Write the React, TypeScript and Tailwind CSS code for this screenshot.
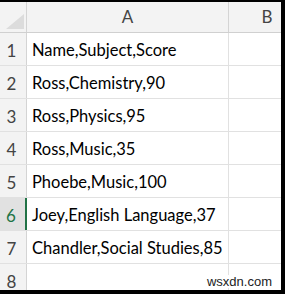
const rows = [
  "Name,Subject,Score",
  "Ross,Chemistry,90",
  "Ross,Physics,95",
  "Ross,Music,35",
  "Phoebe,Music,100",
  "Joey,English Language,37",
  "Chandler,Social Studies,85",
  "",
];

export default function App() {
  return (
    <div className="w-[285px] h-[294px] bg-black pt-[2px] pr-[4px] pb-[4px]">
      <div
        className="relative w-[281px] h-[288px] bg-white overflow-hidden"
        style={{ fontFamily: "Lato, 'Open Sans', sans-serif" }}
      >
        {/* column headers */}
        <div className="flex h-[31px] bg-[#f3f3f3] border-b border-[#d0d0d0]">
          <div className="w-[27px] shrink-0 border-r border-[#d4d4d4] flex items-end justify-end pr-[2px] pb-[3px]">
            <svg width="18" height="15" viewBox="0 0 18 15">
              <polygon points="0,15 18,15 18,0" fill="#dcdcdc" />
            </svg>
          </div>
          <div className="w-[202px] shrink-0 border-r border-[#d4d4d4] flex items-center justify-center text-[17px] text-[#444]">
            A
          </div>
          <div className="w-[76px] shrink-0 flex items-center justify-center text-[17px] text-[#444]">
            B
          </div>
        </div>

        {rows.map((text, i) => {
          const active = i === 5;
          return (
            <div key={i} className="flex h-[33px] border-b border-[#e1e1e1]">
              <div
                className={
                  "w-[27px] shrink-0 flex items-end justify-center pb-[2px] pr-[3px] text-[17px] " +
                  (active
                    ? "bg-[#e1e1e1] border-r-2 border-[#217346] text-[#217346]"
                    : "bg-[#f3f3f3] border-r border-[#d4d4d4] text-[#444]")
                }
              >
                {i + 1}
              </div>
              <div className="w-[202px] shrink-0 border-r border-[#e1e1e1] flex items-end pl-[5px] pb-[2px] text-[16.5px] text-black whitespace-nowrap">
                {text}
              </div>
              <div className="w-[76px] shrink-0" />
            </div>
          );
        })}

        <div
          className="absolute right-[8px] bottom-[2px] text-[13px] text-[#222] bg-white leading-none px-[1px]"
          style={{ fontFamily: "'Liberation Sans', Arial, sans-serif" }}
        >
          wsxdn.com
        </div>
      </div>
    </div>
  );
}
